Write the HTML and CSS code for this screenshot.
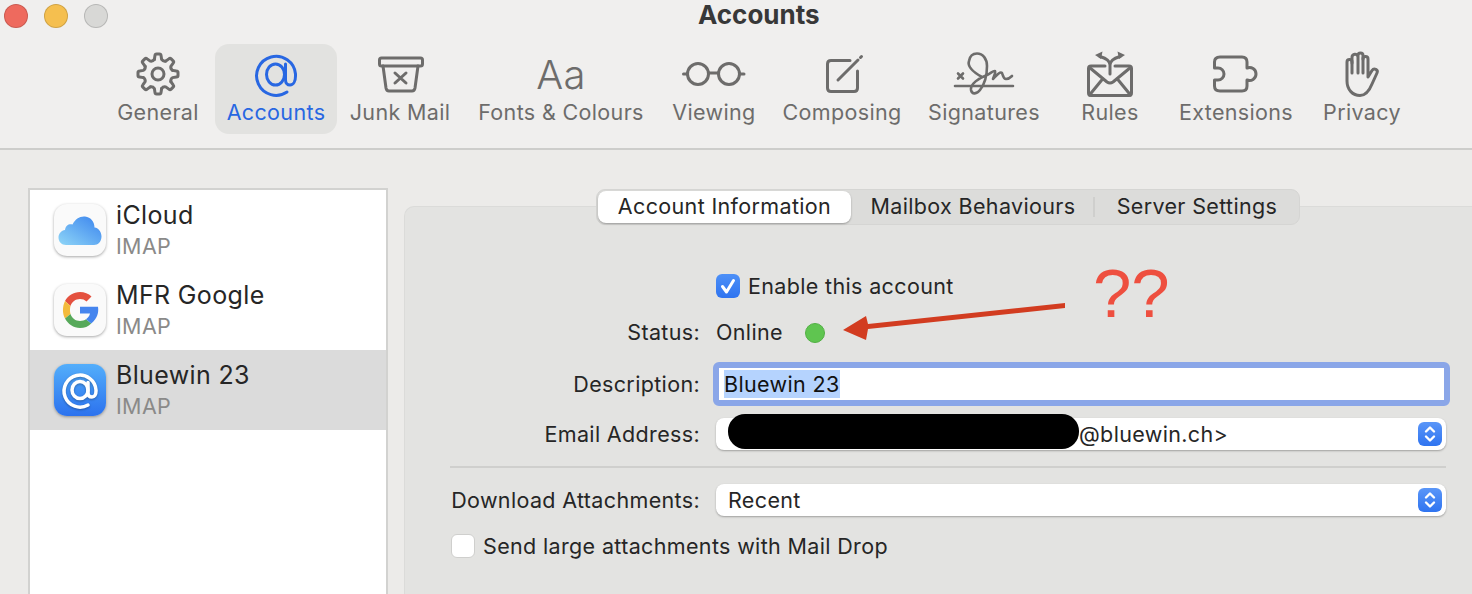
FILE: index.html
```html
<!DOCTYPE html>
<html lang="en">
<head>
    <meta charset="UTF-8">
    <meta name="viewport" content="width=device-width, initial-scale=1.0">
    <title>Accounts</title>
    <link rel="stylesheet" href="styles.css">
</head>
<body>
    <header class="header">
        <div class="titlebar">
            <div class="lights">
                <span class="light red"></span>
                <span class="light yellow"></span>
                <span class="light grey"></span>
            </div>
            <h1 class="title">Accounts</h1>
        </div>
        <nav class="toolbar">
            <div class="tool tool-general">
                <div class="slot">
                    <svg class="line" width="44" height="44" viewBox="0 0 44 44">
                        <defs>
                            <path id="tooth" d="M18.37 7.45 L18.95 3.6 Q19.1 2 20.6 2 H23.4 Q24.9 2 25.05 3.6 L25.63 7.45 A4 4 0 0 0 29.73 9.14"/>
                        </defs>
                        <use href="#tooth"/>
                        <use href="#tooth" transform="rotate(45 22 22)"/>
                        <use href="#tooth" transform="rotate(90 22 22)"/>
                        <use href="#tooth" transform="rotate(135 22 22)"/>
                        <use href="#tooth" transform="rotate(180 22 22)"/>
                        <use href="#tooth" transform="rotate(225 22 22)"/>
                        <use href="#tooth" transform="rotate(270 22 22)"/>
                        <use href="#tooth" transform="rotate(315 22 22)"/>
                        <circle cx="22" cy="22" r="6"/>
                    </svg>
                </div>
                <span>General</span>
            </div>
            <div class="tool tool-accounts active">
                <div class="slot">
                    <svg class="line" width="44" height="44" viewBox="0 0 44 44">
                        <path d="M33 40 A19.5 19.5 0 1 1 41.5 22 V24 C41.5 29 39.5 33 36 33 C33.5 33 31.500 31 31.500 28 V12"/>
                        <ellipse cx="21.500" cy="22.500" rx="9" ry="10.500"/>
                    </svg>
                </div>
                <span>Accounts</span>
            </div>
            <div class="tool tool-junk">
                <div class="slot">
                    <svg class="line" width="50" height="40" viewBox="0 0 50 40">
                        <rect x="4.500" y="4" width="43" height="8" rx="2"/>
                        <path d="M8 12 L11 34 Q11.500 37 14 37 H37 Q39.500 37 40 34 L43 12"/>
                        <path d="M20 19 L31 29 M31 19 L20 29"/>
                    </svg>
                </div>
                <span>Junk Mail</span>
            </div>
            <div class="tool tool-fonts">
                <div class="slot"><span class="aa">Aa</span></div>
                <span>Fonts &amp; Colours</span>
            </div>
            <div class="tool tool-viewing">
                <div class="slot">
                    <svg class="line" width="64" height="24" viewBox="0 0 64 24">
                        <circle cx="16" cy="12" r="10.500"/>
                        <circle cx="47" cy="12" r="10.500"/>
                        <path d="M26.500 11 H36.500 M1.500 12 H5.500 M57.500 12 H62"/>
                    </svg>
                </div>
                <span>Viewing</span>
            </div>
            <div class="tool tool-composing">
                <div class="slot">
                    <svg class="line" width="44" height="40" viewBox="0 0 44 40">
                        <path d="M30 6.500 H11 Q7.500 6.500 7.500 10 V34 Q7.500 37.500 11 37.500 H34 Q37.500 37.500 37.500 34 V17"/>
                        <path d="M18 26 L38 6 M40.500 3.500 L41.500 2.500"/>
                    </svg>
                </div>
                <span>Composing</span>
            </div>
            <div class="tool tool-signatures">
                <div class="slot">
                    <svg class="line thin" width="58" height="44" viewBox="0 0 58 44">
                        <path d="M0 34 H58 M3 21.500 L8 26.500 M8 21.500 L3 26.500"/>
                        <path d="M27 25 C18 20 12 15 14 9 C15 3 19 1.500 22 1.500 C28 1.500 32 7 32 14 C32 24 29 33 25 38 C22 42 17 43 16 38 C15 32 24 26 32 23 C36 21 39 18 40 19 C41 21 38 26 38 27 C41 24 45 19 47 21 C48 23 48 27 51 27 C53 27 55 26 57 24"/>
                    </svg>
                </div>
                <span>Signatures</span>
            </div>
            <div class="tool tool-rules">
                <div class="slot">
                    <svg class="line" width="50" height="48" viewBox="0 0 50 48">
                        <path d="M20 16 H6 Q3.500 16 3.500 18.500 V43 Q3.500 45.500 6 45.500 H44 Q46.500 45.500 46.500 43 V18.500 Q46.500 16 44 16 H30"/>
                        <path d="M4.500 17.500 L22 32 Q25 34 28 32 L45.500 17.500 M4.500 45 L18 28.500 M45.500 45 L32 28.500"/>
                        <path d="M25 24 V15 C25 10 20 8 15 6.500 M25 15 C25 10 30 8 35 6.500"/>
                        <path class="solid" d="M10 5 L17.500 1.500 L16 9 Z M40 5 L32.500 1.500 L34 9 Z"/>
                    </svg>
                </div>
                <span>Rules</span>
            </div>
            <div class="tool tool-extensions">
                <div class="slot">
                    <svg class="line" width="50" height="40" viewBox="0 0 50 40">
                        <path d="M9 3 H31 Q36 3 36 8 V14 A6.500 6.500 0 1 1 36 26 V32 Q36 37 31 37 H9 Q3.500 37 3.500 32 V26 H7 A6 6 0 0 0 7 14 H3.500 V8 Q3.500 3 9 3 Z"/>
                    </svg>
                </div>
                <span>Extensions</span>
            </div>
            <div class="tool tool-privacy">
                <div class="slot">
                    <svg class="line" width="36" height="46" viewBox="0 0 36 46">
                        <path d="M8 22 V11 A2.500 2.500 0 0 0 3 11 V30 C3 39 9 44.500 16 44.500 C23 44.500 26 38 28 33 L33 22 C34.500 18.500 30 16.500 28 19.500 L24 26 V8 A2.500 2.500 0 0 0 19 8 V22"/>
                        <path d="M19 8 V4.500 A2.500 2.500 0 0 0 14 4.500 V22 M14 6 A2.500 2.500 0 0 0 8 6.500 V12"/>
                    </svg>
                </div>
                <span>Privacy</span>
            </div>
        </nav>
    </header>

    <main class="main">
        <aside class="sidebar">
            <div class="account">
                <div class="app-icon">
                    <svg width="52" height="52" viewBox="0 0 52 52">
                        <defs>
                            <linearGradient id="cloud" x1="0" y1="1" x2="1" y2="0">
                                <stop offset="0" stop-color="#8fd6f7"/>
                                <stop offset="1" stop-color="#3a83ee"/>
                            </linearGradient>
                        </defs>
                        <path fill="url(#cloud)" d="M12 41 C7.500 41 4.500 37.500 4.500 33.500 C4.500 29.500 7.500 26.500 11 26 C11.500 21.500 15 19.500 18.500 20.500 C21 15 26 12 31 12.500 C37 13 40.500 18 40.500 23.500 C45 24 47.500 28.500 47.500 32.500 C47.500 37.500 44 41 40 41 Z"/>
                    </svg>
                </div>
                <div class="account-text">
                    <div class="account-name">iCloud</div>
                    <div class="account-type">IMAP</div>
                </div>
            </div>
            <div class="account">
                <div class="app-icon">
                    <svg width="52" height="52" viewBox="0 0 52 52">
                        <path fill="#e4513f" d="M11 17 C14 11.500 19.500 8 26 8 C30.500 8 34.500 9.500 37.500 12.500 L32.500 17.500 C30.800 15.800 28.500 15 26 15 C21.500 15 17.800 17.800 16.500 22 Z"/>
                        <path fill="#f3bb3c" d="M11 17 L16.500 22 C15.800 24.500 15.800 27.500 16.500 30 L11 34.500 C8.300 29.500 8.300 22.500 11 17 Z"/>
                        <path fill="#57a95a" d="M11 34.500 L16.500 30 C17.800 34.200 21.500 37 26 37 C28.500 37 30.500 36.400 32 35.300 L37.200 39.500 C34.300 42.500 30.500 44 26 44 C19.500 44 14 40 11 34.500 Z"/>
                        <path fill="#4585ee" d="M26 22.800 H44 C45 29 43 35 37.200 39.500 L32 35.300 C34 33.900 35.500 31.800 36 29.500 H26 Z"/>
                    </svg>
                </div>
                <div class="account-text">
                    <div class="account-name">MFR Google</div>
                    <div class="account-type">IMAP</div>
                </div>
            </div>
            <div class="account selected">
                <div class="app-icon app-icon-blue">
                    <svg class="white-line" width="52" height="52" viewBox="0 0 52 52">
                        <path d="M34 41 A16 16 0 1 1 42 26 V27 C42 30.500 40.500 33 38 33 C35.500 33 34 31.500 34 29 V18.500"/>
                        <ellipse cx="26" cy="26" rx="8" ry="8.500"/>
                    </svg>
                </div>
                <div class="account-text">
                    <div class="account-name">Bluewin 23</div>
                    <div class="account-type">IMAP</div>
                </div>
            </div>
        </aside>

        <section class="panel">
            <div class="tabs">
                <div class="tab tab-current">Account Information</div>
                <div class="tab tab-mailbox">Mailbox Behaviours</div>
                <div class="tab tab-server">Server Settings</div>
            </div>
            <div class="form">
                <div class="row row-enable">
                    <div></div>
                    <label class="check-line">
                        <span class="checkbox checked">
                            <svg width="24" height="24" viewBox="0 0 24 24"><path d="M6.500 12.500 L10.500 18 L17.500 6.500"/></svg>
                        </span>
                        Enable this account
                    </label>
                </div>
                <div class="row row-status">
                    <div class="label">Status:</div>
                    <div class="status">Online <span class="dot"></span></div>
                </div>
                <div class="row row-description">
                    <div class="label">Description:</div>
                    <div class="textfield"><span class="selection">Bluewin 23</span></div>
                </div>
                <div class="row row-email">
                    <div class="label">Email Address:</div>
                    <div class="select">
                        <span class="redact"></span>
                        <span class="select-value">@bluewin.ch&gt;</span>
                        <span class="stepper">
                            <svg width="24" height="24" viewBox="0 0 24 24"><path d="M8 9.500 L12 5.500 L16 9.500 M8 14.500 L12 18.500 L16 14.500"/></svg>
                        </span>
                    </div>
                </div>
                <div class="divider"></div>
                <div class="row row-download">
                    <div class="label">Download Attachments:</div>
                    <div class="select">
                        <span class="select-value">Recent</span>
                        <span class="stepper">
                            <svg width="24" height="24" viewBox="0 0 24 24"><path d="M8 9.500 L12 5.500 L16 9.500 M8 14.500 L12 18.500 L16 14.500"/></svg>
                        </span>
                    </div>
                </div>
                <label class="check-line row-drop">
                    <span class="checkbox"></span>
                    Send large attachments with Mail Drop
                </label>
            </div>
        </section>
    </main>

    <!-- red markup drawn on top of the screenshot -->
    <svg class="arrow" width="240" height="50" viewBox="0 0 240 50">
        <path d="M3 30 L26 16 L28 24 L225 3 L225 8 L28 29 L26 40 Z" fill="#d23c20"/>
    </svg>
    <div class="marks">??</div>
</body>
</html>
```

FILE: styles.css
```css
* {
    box-sizing: border-box;
}

html, body {
    margin: 0;
    height: 594px;
    overflow: hidden;
}

body {
    position: relative;
    background-color: #ecebe9;
    color: #262626;
    font-family: Inter, "Noto Sans", sans-serif;
    font-size: 21.5px;
    letter-spacing: 0.35px;
}

/* window header */
.header {
    height: 150px;
    background-color: #f0efee;
    border-bottom: 2px solid #cdcdcb;
}

.titlebar {
    display: flex;
    height: 44px;
}

.lights {
    display: flex;
    gap: 16px;
    padding: 4px 0 0 4px;
}

.light {
    width: 24px;
    height: 24px;
    border-radius: 50%;
    border: 1px solid rgba(0, 0, 0, 0.15);
}

.red { background-color: #ee6a5e; }
.yellow { background-color: #f5bf4f; }
.grey { background-color: #d8d8d6; }

.title {
    margin: 0 0 0 590px;
    font-size: 26px;
    line-height: 30px;
    font-weight: 700;
    letter-spacing: 0;
    color: #383838;
}

.toolbar {
    display: flex;
    padding-left: 101px;
}

.tool {
    display: flex;
    flex-direction: column;
    align-items: center;
    height: 90px;
    border-radius: 14px;
    color: #6d6c6b;
    line-height: 24px;
    white-space: nowrap;
}

.tool-general { width: 114px; }
.tool-accounts { width: 122px; }
.tool-junk { width: 126px; }
.tool-fonts { width: 196px; }
.tool-viewing { width: 110px; }
.tool-composing { width: 146px; }
.tool-signatures { width: 138px; }
.tool-rules { width: 114px; }
.tool-extensions { width: 138px; }
.tool-privacy { width: 114px; }

.active {
    background-color: #e2e2e0;
    color: #2867e2;
}

.slot {
    display: flex;
    align-items: center;
    justify-content: center;
    height: 52px;
    margin-top: 4px;
    flex-shrink: 0;
}

.line {
    fill: none;
    stroke: currentColor;
    stroke-width: 3;
    stroke-linecap: round;
    stroke-linejoin: round;
    overflow: visible;
}

.thin {
    stroke-width: 2.6;
}

.solid {
    fill: currentColor;
    stroke: none;
}

.aa {
    margin-top: 2px;
    font-size: 40px;
    font-weight: 300;
    line-height: 52px;
}

/* main area */
.main {
    display: flex;
    padding: 38px 0 0 28px;
}

.sidebar {
    width: 360px;
    height: 406px;
    flex-shrink: 0;
    background-color: #fff;
    border: 2px solid #d2d2d0;
    border-bottom: none;
}

.account {
    display: flex;
    align-items: center;
    height: 80px;
    padding-left: 24px;
}

.selected {
    background-color: #dbdbdb;
}

.app-icon {
    width: 52px;
    height: 52px;
    flex-shrink: 0;
    border-radius: 13px;
    background-color: #fafafa;
    box-shadow: 0 1px 3px rgba(0, 0, 0, 0.35);
}

.app-icon-blue {
    background: linear-gradient(#53aefb, #2c72ee);
}

.white-line {
    fill: none;
    stroke: #fff;
    stroke-width: 3.5;
    stroke-linecap: round;
    filter: drop-shadow(0 1px 1px rgba(0, 0, 0, 0.3));
}

.account-text {
    margin-left: 10px;
}

.account-name {
    font-size: 25px;
    line-height: 30px;
    color: #262626;
}

.account-type {
    margin-top: 2px;
    line-height: 28px;
    color: #8a8a89;
}

/* tabbed panel */
.panel {
    flex: 1;
    height: 388px;
    margin: 18px 0 0 16px;
    padding-left: 45px;
    background-color: #e3e3e1;
    border: 1px solid #dbdbd9;
    border-right: none;
    border-bottom: none;
    border-radius: 10px 0 0 0;
}

.tabs {
    display: flex;
    align-items: center;
    width: 704px;
    height: 36px;
    margin: -18px 0 0 146px;
    padding-left: 1px;
    background-color: #dcdcda;
    border: 1px solid #d5d5d3;
    border-radius: 9px;
}

.tab {
    height: 32px;
    line-height: 30px;
    text-align: center;
    white-space: nowrap;
}

.tab-current {
    width: 253px;
    background-color: #fff;
    border-radius: 8px;
    box-shadow: 0 1px 2px rgba(0, 0, 0, 0.3);
}

.tab-mailbox {
    width: 244px;
    position: relative;
}

.tab-mailbox::after {
    content: "";
    position: absolute;
    right: 0;
    top: 6px;
    height: 20px;
    border-right: 2px solid #cfcfcd;
}

.tab-server {
    width: 204px;
}

.form {
    width: 996px;
    padding-top: 49px;
}

.row {
    display: grid;
    grid-template-columns: 250px 1fr;
    column-gap: 16px;
    align-items: center;
}

.row-enable { height: 24px; }
.row-status { height: 24px; margin-top: 21px; }
.row-description { height: 44px; margin-top: 19px; }
.row-email { height: 32px; margin-top: 12px; }
.row-download { height: 32px; margin-top: 16px; }
.row-drop { margin-top: 18px; margin-left: 1px; }

.label {
    text-align: right;
    white-space: nowrap;
}

.check-line {
    display: flex;
    align-items: center;
    gap: 8px;
    height: 24px;
    white-space: nowrap;
}

.checkbox {
    width: 24px;
    height: 24px;
    flex-shrink: 0;
    background-color: #fff;
    border: 1px solid #cfcfcd;
    border-radius: 6px;
}

.checkbox svg {
    display: block;
    margin: -1px;
    fill: none;
    stroke: #fff;
    stroke-width: 3;
    stroke-linecap: round;
    stroke-linejoin: round;
}

.checked {
    background: linear-gradient(#4d90f7, #2f74f0);
    border: none;
}

.checked svg {
    margin: 0;
}

.status {
    display: flex;
    align-items: center;
    gap: 22px;
}

.dot {
    width: 20px;
    height: 20px;
    margin-top: 2px;
    background-color: #5fc550;
    border: 1px solid #52b044;
    border-radius: 50%;
}

.textfield {
    height: 44px;
    margin: 0 -4px 0 -3px;
    padding: 2px 0 0 5px;
    background-color: #fff;
    border: 6px solid #8aa6e8;
    border-radius: 6px;
    color: #111;
    line-height: 28px;
}

.selection {
    display: inline-block;
    background-color: #b5d3fe;
}

.select {
    display: flex;
    align-items: center;
    height: 32px;
    padding: 0 4px 0 12px;
    background-color: #fff;
    border-radius: 8px;
    box-shadow: 0 1px 2px rgba(0, 0, 0, 0.3);
}

.select-value {
    flex: 1;
}

.redact {
    width: 351px;
    height: 35px;
    margin-bottom: 5px;
    flex-shrink: 0;
    background-color: #000;
    border-radius: 17px;
}

.stepper {
    width: 24px;
    height: 24px;
    background: linear-gradient(#5a96f8, #2f74f0);
    border-radius: 6px;
}

.stepper svg {
    display: block;
    fill: none;
    stroke: #fff;
    stroke-width: 2.4;
    stroke-linecap: round;
    stroke-linejoin: round;
}

.divider {
    height: 2px;
    margin-top: 16px;
    background-color: #cfcfcd;
}

/* annotation */
.arrow {
    position: absolute;
    left: 840px;
    top: 300px;
}

.marks {
    position: absolute;
    left: 1093px;
    top: 254px;
    font-family: "Liberation Sans", sans-serif;
    font-size: 69px;
    line-height: 80px;
    letter-spacing: 0;
    color: #ee4f3f;
}
```
